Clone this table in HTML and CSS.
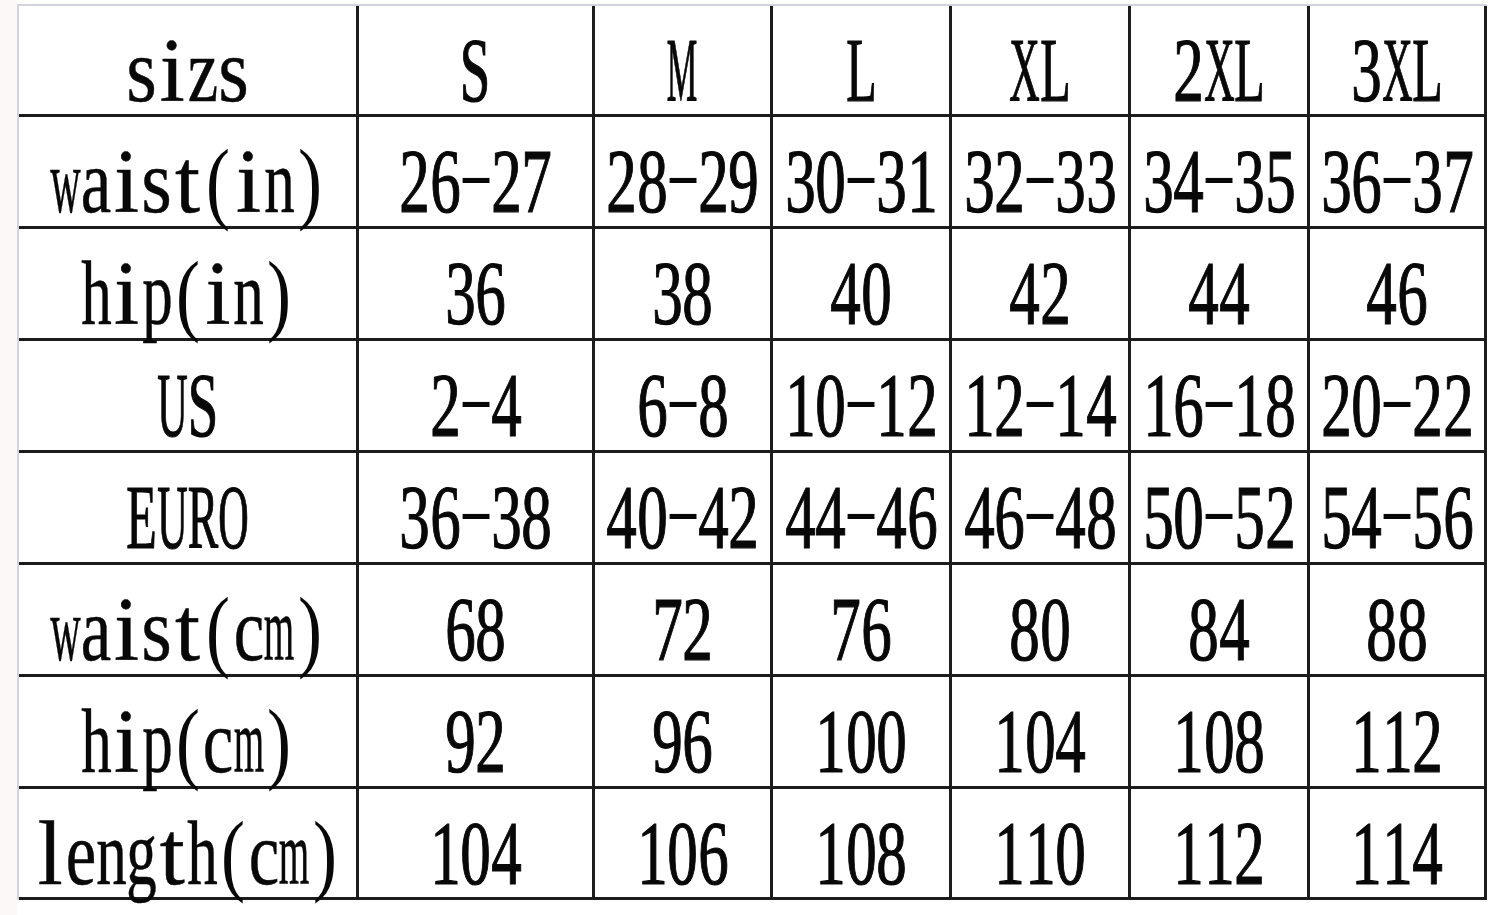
FILE: index.html
```html
<!DOCTYPE html>
<html lang="en">
<head>
<meta charset="utf-8">
<title>Size chart</title>
<link rel="stylesheet" href="styles.css">
</head>
<body>
<div class="page">
  <div class="chart">
    <div class="c">sizs</div><div class="c">S</div><div class="c">M</div><div class="c">L</div><div class="c">XL</div><div class="c">2XL</div><div class="c">3XL</div>
    <div class="c">waist(in)</div><div class="c">26-27</div><div class="c">28-29</div><div class="c">30-31</div><div class="c">32-33</div><div class="c">34-35</div><div class="c">36-37</div>
    <div class="c">hip(in)</div><div class="c">36</div><div class="c">38</div><div class="c">40</div><div class="c">42</div><div class="c">44</div><div class="c">46</div>
    <div class="c">US</div><div class="c">2-4</div><div class="c">6-8</div><div class="c">10-12</div><div class="c">12-14</div><div class="c">16-18</div><div class="c">20-22</div>
    <div class="c">EURO</div><div class="c">36-38</div><div class="c">40-42</div><div class="c">44-46</div><div class="c">46-48</div><div class="c">50-52</div><div class="c">54-56</div>
    <div class="c">waist(cm)</div><div class="c">68</div><div class="c">72</div><div class="c">76</div><div class="c">80</div><div class="c">84</div><div class="c">88</div>
    <div class="c">hip(cm)</div><div class="c">92</div><div class="c">96</div><div class="c">100</div><div class="c">104</div><div class="c">108</div><div class="c">112</div>
    <div class="c">length(cm)</div><div class="c">104</div><div class="c">106</div><div class="c">108</div><div class="c">110</div><div class="c">112</div><div class="c">114</div>
  </div>
</div>
<script src="script.js"></script>
</body>
</html>
```

FILE: styles.css
```css
html, body {
  margin: 0;
  padding: 0;
  background: #ffffff;
}

.page {
  width: 1500px;
  height: 915px;
  padding: 4px 0 0 17px;
  box-sizing: border-box;
  background: linear-gradient(to right, #fcf8f8 0, #fcf8f8 17px, #ffffff 17px);
}

.chart {
  display: grid;
  grid-template-columns: 340px 236px 178px 179px 179px 179px 177px;
  grid-template-rows: 111px repeat(6, 112px) 111px;
  width: max-content;
  border-top: 2px solid #d3d5dc;
  border-left: 2px solid #d3d5dc;
  font-family: "Liberation Serif", "Times New Roman", serif;
  font-size: 90px;
  line-height: 90px;
  color: #080808;
}

.c {
  box-sizing: border-box;
  border-right: 3px solid #1c1c1c;
  border-bottom: 3px solid #1c1c1c;
  padding-top: 20px;
  text-align: center;
  white-space: nowrap;
  overflow: visible;
}

.t {
  display: inline-block;
}

.ch {
  display: inline-flex;
  justify-content: center;
  width: 30.5px;
  vertical-align: baseline;
}

.g {
  display: inline-block;
  flex-shrink: 0;
  transform-origin: 50% 50%;
}

.heavy .g {
  -webkit-text-stroke: 1.2px #080808;
}

.mid .g {
  -webkit-text-stroke: 0.5px #080808;
}

.dash .g {
  transform: translateY(-9px) scale(1.15, 0.75);
}
```

FILE: script.js
```js
document.querySelectorAll('.c').forEach(function (cell) {
  var text = cell.textContent.trim();
  cell.textContent = '';
  var line = document.createElement('span');
  line.className = 't';
  for (var i = 0; i < text.length; i++) {
    var ch = text[i];
    var box = document.createElement('span');
    var cls = 'ch';
    if (ch === '-') cls += ' dash';
    else if (ch === '(' || ch === ')') cls += ' paren';
    else if (/[0-9A-Z]/.test(ch)) cls += ' heavy';
    else cls += ' mid';
    box.className = cls;
    var g = document.createElement('span');
    g.className = 'g';
    g.textContent = ch;
    box.appendChild(g);
    line.appendChild(box);
  }
  cell.appendChild(line);
});

document.querySelectorAll('.ch:not(.dash) .g').forEach(function (g) {
  var w = g.getBoundingClientRect().width;
  var s = Math.min(1, 30.5 / w);
  if (g.parentNode.classList.contains('paren')) s = Math.min(s, 0.8);
  g.style.transform = 'scaleX(' + s.toFixed(3) + ')';
});
```
